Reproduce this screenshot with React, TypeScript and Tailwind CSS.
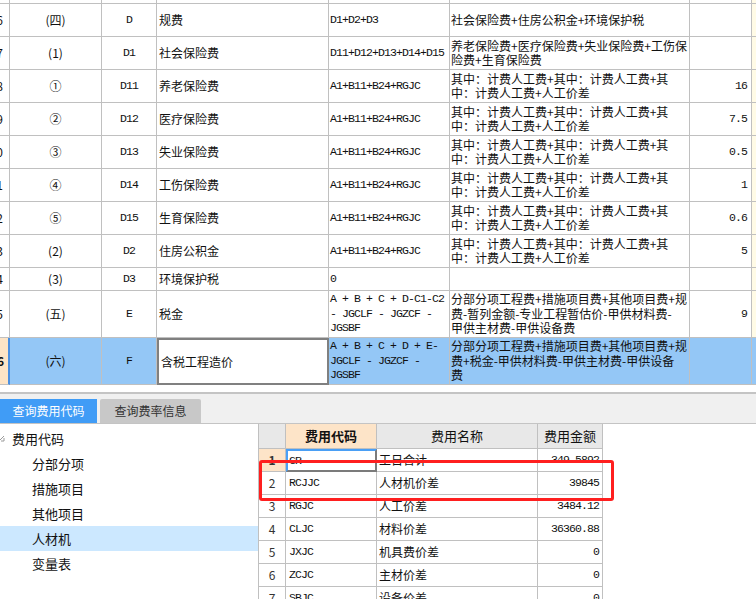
import React from 'react';

type Row = {
  n: string;
  no: string;
  code: string;
  name: string;
  formula: string[];
  desc: string[];
  value: string;
  h: string;
  selected?: boolean;
};

const labor = ['其中：计费人工费+其中：计费人工费+其', '中：计费人工费+人工价差'];
const base = ['A1+B11+B24+RGJC'];

const rows: Row[] = [
  { n: '6', no: '(四)', code: 'D', name: '规费', formula: ['D1+D2+D3'], desc: ['社会保险费+住房公积金+环境保护税'], value: '', h: 'h-[33px]' },
  { n: '7', no: '(1)', code: 'D1', name: '社会保险费', formula: ['D11+D12+D13+D14+D15'], desc: ['养老保险费+医疗保险费+失业保险费+工伤保', '险费+生育保险费'], value: '', h: 'h-[33px]' },
  { n: '8', no: '①', code: 'D11', name: '养老保险费', formula: base, desc: labor, value: '16', h: 'h-[33px]' },
  { n: '9', no: '②', code: 'D12', name: '医疗保险费', formula: base, desc: labor, value: '7.5', h: 'h-[33px]' },
  { n: '0', no: '③', code: 'D13', name: '失业保险费', formula: base, desc: labor, value: '0.5', h: 'h-[33px]' },
  { n: '1', no: '④', code: 'D14', name: '工伤保险费', formula: base, desc: labor, value: '1', h: 'h-[33px]' },
  { n: '2', no: '⑤', code: 'D15', name: '生育保险费', formula: base, desc: labor, value: '0.6', h: 'h-[33px]' },
  { n: '3', no: '(2)', code: 'D2', name: '住房公积金', formula: base, desc: labor, value: '5', h: 'h-[33px]' },
  { n: '4', no: '(3)', code: 'D3', name: '环境保护税', formula: ['0'], desc: [], value: '', h: 'h-[23px]' },
  {
    n: '5', no: '(五)', code: 'E', name: '税金',
    formula: ['A + B + C + D-C1-C2', '- JGCLF - JGZCF -', 'JGSBF'],
    desc: ['分部分项工程费+措施项目费+其他项目费+规', '费-暂列金额-专业工程暂估价-甲供材料费-', '甲供主材费-甲供设备费'],
    value: '9', h: 'h-[47px]',
  },
  {
    n: '6', no: '(六)', code: 'F', name: '含税工程造价',
    formula: ['A + B + C + D + E-', 'JGCLF - JGZCF -', 'JGSBF'],
    desc: ['分部分项工程费+措施项目费+其他项目费+规', '费+税金-甲供材料费-甲供主材费-甲供设备', '费'],
    value: '', h: 'h-[47px]', selected: true,
  },
];

const codes = [
  ['1', 'GR', '工日合计', '349.5892'],
  ['2', 'RCJJC', '人材机价差', '39845'],
  ['3', 'RGJC', '人工价差', '3484.12'],
  ['4', 'CLJC', '材料价差', '36360.88'],
  ['5', 'JXJC', '机具费价差', '0'],
  ['6', 'ZCJC', '主材价差', '0'],
  ['7', 'SBJC', '设备价差', '0'],
];

const tree = ['分部分项', '措施项目', '其他项目', '人材机', '变量表'];

const mono = "font-['Liberation_Mono','Noto_Sans_CJK_SC',monospace] text-[11.5px] tracking-[-0.9px]";
const line = 'border-r border-b border-[#c0c0c0]';

function FeeRow({ r }: { r: Row }) {
  const bg = r.selected ? 'bg-[#94c7f6]' : 'bg-white';
  return (
    <div className={`grid grid-cols-[10px_92px_55px_172px_121px_240px_62px_4px] ${r.h}`}>
      <div
        className={`flex items-center justify-end overflow-hidden text-[12px] border-b border-[#c0c0c0] ${
          r.selected ? 'bg-[#fde4c6] font-bold border-r-2 border-r-[#4a90e2] pr-[4px]' : 'bg-white border-r pr-[6px]'
        }`}
      >
        {r.n}
      </div>
      <div className={`flex items-center justify-center text-[12px] ${line} ${bg}`}>{r.no}</div>
      <div className={`flex items-center justify-center ${mono} ${line} ${bg}`}>{r.code}</div>
      {r.selected ? (
        <div className="flex items-center border-2 border-[#808080] bg-white pl-[2px] text-[12px]">{r.name}</div>
      ) : (
        <div className={`flex items-center pl-[2px] text-[12px] ${line} ${bg}`}>{r.name}</div>
      )}
      <div className={`flex flex-col justify-center overflow-hidden pl-[1px] leading-[14.5px] whitespace-pre ${mono} ${line} ${bg}`}>
        {r.formula.map((f, i) => (
          <div key={i}>{f}</div>
        ))}
      </div>
      <div className={`flex flex-col justify-center overflow-hidden pl-[1px] text-[12px] leading-[14.5px] whitespace-nowrap ${line} ${bg}`}>
        {r.desc.map((d, i) => (
          <div key={i}>{d}</div>
        ))}
      </div>
      <div className={`flex items-center justify-end pr-[4px] ${mono} ${line} ${bg}`}>{r.value}</div>
      <div className={r.selected ? 'bg-[#94c7f6] border-b border-[#c0c0c0]' : 'bg-[#fffbe6] border-b border-[#c0c0c0]'} />
    </div>
  );
}

export default function App() {
  return (
    <div className="relative h-[599px] w-[756px] overflow-hidden bg-white text-[#111] font-['Noto_Sans_CJK_SC',sans-serif]">
      {/* 上方费用汇总表 */}
      <div className="grid h-[4px] grid-cols-[10px_92px_55px_172px_121px_240px_62px_4px]">
        {[0, 1, 2, 3, 4, 5, 6].map((i) => (
          <div key={i} className={`${line} bg-white`} />
        ))}
        <div className="border-b border-[#c0c0c0] bg-[#fffbe6]" />
      </div>
      {rows.map((r, i) => (
        <FeeRow key={i} r={r} />
      ))}

      <div className="h-[7px]" />

      {/* 标签页 */}
      <div className="flex h-[32px] items-end gap-[3px] border-t-2 border-b border-[#c4c4c4] bg-[#f0f0f0]">
        <div className="flex h-[24px] w-[97px] items-center justify-center bg-[#409cf6] text-[12px] text-white">
          查询费用代码
        </div>
        <div className="flex h-[24px] w-[101px] items-center justify-center rounded-t-[2px] bg-[#c8c8c8] text-[12px] text-[#333]">
          查询费率信息
        </div>
      </div>

      <div className="flex">
        {/* 左侧树 */}
        <div className="w-[258px] pt-[2px] text-[13px]">
          <div className="relative flex h-[25px] items-center pl-[12px]">
            <svg className="absolute left-[-2px] top-[9px]" width="7" height="7" viewBox="0 0 7 7">
              <path d="M1 6 L6 1" stroke="#9a9a9a" strokeWidth="1" fill="none" />
              <path d="M3 6 L6 6 L6 3" stroke="#9a9a9a" strokeWidth="1" fill="none" />
            </svg>
            费用代码
          </div>
          {tree.map((t) => (
            <div
              key={t}
              className={`flex h-[25px] items-center pl-[32px] ${t === '人材机' ? 'bg-[#cce8ff]' : ''}`}
            >
              {t}
            </div>
          ))}
        </div>

        {/* 费用代码表 */}
        <div className="border-l border-[#c0c0c0]">
          <div className="grid h-[25px] grid-cols-[27px_91px_161px_65px] text-[13px]">
            <div className={`${line} bg-[#e8e8e8]`} />
            <div className={`flex items-center justify-center font-bold ${line} bg-[#fde4c8]`}>费用代码</div>
            <div className={`flex items-center justify-center ${line} bg-[#e8e8e8]`}>费用名称</div>
            <div className={`flex items-center justify-center ${line} bg-[#e8e8e8]`}>费用金额</div>
          </div>
          {codes.map(([n, c, name, amt], i) => (
            <div key={n} className="grid h-[23px] grid-cols-[27px_91px_161px_65px]">
              <div
                className={`flex items-center justify-center text-[12px] text-[#333] ${line} ${
                  i === 0 ? 'bg-[#fde4c8] font-bold' : 'bg-white'
                }`}
              >
                {n}
              </div>
              {i === 0 ? (
                <div className={`flex items-center border-l-2 border-t-2 border-r-2 border-b-2 border-l-[#4a9ff5] border-t-[#4a9ff5] border-r-[#7b7b7b] border-b-[#7b7b7b] pl-[1px] ${mono}`}>
                  {c}
                </div>
              ) : (
                <div className={`flex items-center pl-[3px] ${mono} ${line}`}>{c}</div>
              )}
              <div className={`flex items-center pl-[2px] text-[12px] ${line}`}>{name}</div>
              <div className={`flex items-center justify-end pr-[3px] ${mono} ${line}`}>{amt}</div>
            </div>
          ))}
        </div>
      </div>

      {/* 红色标注框 */}
      <div className="absolute left-[259px] top-[460px] h-[41px] w-[355px] rounded-[3px] border-[3px] border-[#ff1f1f]" />
    </div>
  );
}
